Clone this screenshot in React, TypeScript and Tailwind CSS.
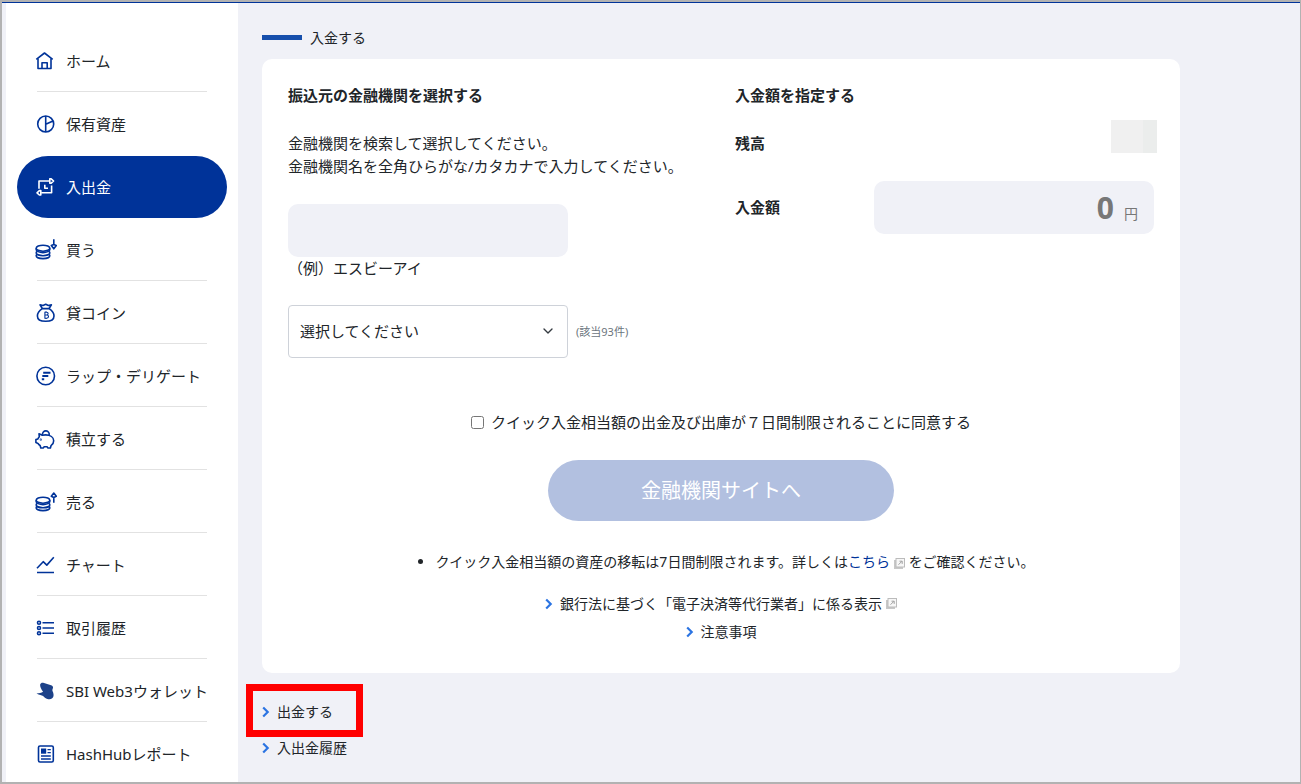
import type { ReactNode } from "react";
import { ChevronDown } from "lucide-react";

const COIN_STACK = (
  <>
    <ellipse cx="8" cy="9.2" rx="6.8" ry="3" />
    <path d="M1.2 9.200v1.200c0 1.700 3 3.200 6.800 3.200s6.800-1.500 6.800-3.200V9.200" />
    <path d="M2 12.400c-.5.500-.8 1-.8 1.500 0 1.500 3 2.800 6.800 2.800s6.800-1.300 6.800-2.800c0-.5-.3-1-.8-1.500" />
    <path d="M2 15.300c-.5.500-.8.900-.8 1.400 0 1.600 3 2.900 6.800 2.900s6.800-1.300 6.800-2.900c0-.5-.3-.9-.8-1.400" />
  </>
);

type NavItem = { label: string; icon: ReactNode; active?: boolean; noLine?: boolean };

const navItems: NavItem[] = [
  {
    label: "ホーム",
    icon: (
      <>
        <path d="M1.3 9.3 9.5 3l8.200 6.300" />
        <path d="M3 8.500v10h13v-10" />
        <path d="M7 18.500v-5.800h5.200v5.800" />
      </>
    ),
  },
  {
    label: "保有資産",
    noLine: true,
    icon: (
      <>
        <circle cx="10.700" cy="11" r="8" />
        <path d="M10.700 3v16M10.700 11.300l7.300-3.400" />
      </>
    ),
  },
  {
    label: "入出金",
    active: true,
    icon: (
      <>
        <path d="M4 12.700V5h10.500M16.600 9.500v7.300H6.200" />
        <path d="M14.800 2.800h1.400L18.600 5l-2.400 2.200h-1.400zM5.800 14.600H4.400L2 16.800 4.400 19h1.400z" />
        <path d="M9.800 8.800v3.400h3.200" />
      </>
    ),
  },
  {
    label: "買う",
    icon: (
      <>
        {COIN_STACK}
        <path d="M18.800.3V6M16.300 6.600l2.500-1.100 2.500 1.100-2.500 3.200z" />
      </>
    ),
  },
  {
    label: "貸コイン",
    icon: (
      <>
        <path d="M7.300 6.600c-3 2-4.900 4.700-4.900 7.300 0 3.200 2.600 5.400 8.300 5.400s8.300-2.200 8.300-5.400c0-2.600-1.900-5.300-4.900-7.300z" />
        <path d="m7.300 6.500-2.300-3.600 3 .6 2.700-1.200 2.700 1.200 3-.6-2.300 3.600" />
        <path
          strokeWidth="1.100"
          d="M9.400 10.200h2.200c2 0 2 2.800 0 2.800H9.800h2c2.300 0 2.300 3.200 0 3.200H9.400M9.900 10.200v6M11 9.300v.9M11 16.200v.9"
        />
      </>
    ),
  },
  {
    label: "ラップ・デリゲート",
    icon: (
      <>
        <circle cx="10.700" cy="11" r="8.800" />
        <path strokeWidth="2" d="M8.200 7.700h7.300M7.300 11h6M6.800 14.300h2.400" />
      </>
    ),
  },
  {
    label: "積立する",
    icon: (
      <>
        <path d="M4.300 8.800 4 5.700l3.300 1.600c1-.3 2-.4 3.200-.4 4.800 0 8.200 2.400 8.200 5.900 0 2-1 3.700-2.700 4.900l-.6 2.300h-2.600l-.6-1.200H9l-.6 1.200H5.800l-.7-2.500c-.9-.5-1.600-1.200-2.100-2.100L.9 14.600v-3l2-.7c.3-.8.8-1.500 1.400-2.100z" />
        <path d="M7.500 6.900a3.400 3.400 0 1 1 6.600.4" />
        <circle cx="5.800" cy="11.700" r=".3" />
      </>
    ),
  },
  {
    label: "売る",
    icon: (
      <>
        {COIN_STACK}
        <path d="M18.800 11.700V6M16.300 5.300l2.500-3.200 2.500 3.200-2.500 1.100z" />
      </>
    ),
  },
  {
    label: "チャート",
    icon: <path d="m2 14.200 6.200-6.500 3.600 3.400 7-7.800M2 18.500h17" />,
  },
  {
    label: "取引履歴",
    icon: (
      <>
        <circle cx="4" cy="5.700" r="1.500" />
        <circle cx="4" cy="11" r="1.500" />
        <circle cx="4" cy="16.300" r="1.500" />
        <path d="M7.500 5.700H19M7.500 11H19M7.500 16.300H19" />
      </>
    ),
  },
  {
    label: "SBI Web3ウォレット",
    icon: (
      <path
        fill="#1d4289"
        stroke="none"
        d="M5.200 4.300c.6-1.500 2-1.900 3.800-1.300l7.100 2.200c1.600.5 2.300 1.600 1.800 3-.4 1.200-.8 2-.2 3.200.8 1.800 1.200 3.700.6 5.400-.7 1.800-2.600 2.900-5 2.400-2.300-.5-4-1.600-5.200-3.200-1.600-.2-3.600-1.100-6.600-2.400 2.500-.3 4.900-.7 6.600-1.800-1.300-1.700-3.400-4.900-2.900-7.500z"
      />
    ),
  },
  {
    label: "HashHubレポート",
    icon: (
      <>
        <rect x="3.500" y="3" width="14.800" height="16" rx="1.500" />
        <rect x="6" y="5.500" width="5.200" height="5.200" fill="currentColor" stroke="none" />
        <path strokeWidth="1.300" d="M12.500 6.600h3.300M12.500 9.700h3.300M6 13h9.800M6 16h9.800" />
      </>
    ),
  },
];

function SideNav() {
  return (
    <nav className="ml-1 w-58 shrink-0 bg-white px-[11px] pt-[27px]">
      <ul className="flex flex-col gap-px">
        {navItems.map((item) => (
          <li
            key={item.label}
            className={item.active ? "rounded-full bg-[#003399] px-5 text-white" : "px-5 text-[#212529]"}
          >
            <a
              href="#"
              className={`flex h-[62px] items-center gap-[9px] border-b pt-px whitespace-nowrap ${
                item.active || item.noLine ? "border-transparent" : "border-[#e2e2e2]"
              }`}
            >
              <svg
                viewBox="0 0 22 22"
                className={`-ml-0.5 size-[22px] shrink-0 ${item.active ? "text-white" : "text-[#003399]"}`}
                fill="none"
                stroke="currentColor"
                strokeWidth="1.600"
                strokeLinejoin="round"
                aria-hidden="true"
              >
                {item.icon}
              </svg>
              {item.label}
            </a>
          </li>
        ))}
      </ul>
    </nav>
  );
}

function ExternalIcon() {
  return (
    <svg viewBox="0 0 11 11" className="ml-1 inline-block size-[11px]" fill="none" aria-hidden="true">
      <path d="M1 2v8h8" stroke="#c8c8c8" strokeWidth="2" />
      <rect x="2" y=".5" width="8.500" height="8.500" fill="#f7f7f7" stroke="#bbb" />
      <path d="M4.500 6.700l3.300-3.300M5.500 3.200h2.700v2.700" stroke="#a0a0a0" />
    </svg>
  );
}

function ArrowLink({ label, external }: { label: string; external?: boolean }) {
  return (
    <a href="#" className="inline-flex items-center text-sm leading-[21px]">
      <svg viewBox="0 0 8 12" className="mr-[7px] h-3 w-2" fill="none" aria-hidden="true">
        <path d="m1.200 1.500 4.500 4.500-4.500 4.500" stroke="#2b74e2" strokeWidth="2.200" />
      </svg>
      {label}
      {external && <ExternalIcon />}
    </a>
  );
}

function DepositCard() {
  return (
    <section className="rounded-[10px] bg-white px-[26px] pt-[25px] pb-[31px]">
      <div className="grid grid-cols-2 gap-7">
        <div>
          <h2 className="font-bold">振込元の金融機関を選択する</h2>
          <label htmlFor="bank-name" className="mt-[25px] block whitespace-nowrap">
            金融機関を検索して選択してください。
            <br />
            金融機関名を全角ひらがな/カタカナで入力してください。
          </label>
          <input
            id="bank-name"
            type="text"
            className="mt-[26px] block h-[53px] w-70 rounded-[10px] bg-[#f0f1f7] px-3 outline-none"
          />
          <p>（例）エスビーアイ</p>
          <div className="mt-[25px] flex items-center gap-2">
            <div className="relative w-70">
              <select
                aria-label="金融機関"
                className="block h-[53px] w-full appearance-none rounded-sm border border-[#ced2d9] bg-white pl-[11px]"
              >
                <option>選択してください</option>
              </select>
              <ChevronDown className="pointer-events-none absolute top-[18px] right-3 size-4 text-[#343a40]" />
            </div>
            <span className="text-[11px] text-[#6c757d]">(該当93件)</span>
          </div>
        </div>

        <div>
          <h2 className="font-bold">入金額を指定する</h2>
          <div className="mt-[13px] flex items-start justify-between">
            <span className="pt-3 font-bold">残高</span>
            <span className="-mr-[3px] flex h-[33px]">
              <span className="w-8 bg-[#f0f0f0]" />
              <span className="w-3.5 bg-[#ebedec]" />
            </span>
          </div>
          <div className="mt-[26px] flex items-center justify-between">
            <label htmlFor="amount" className="font-bold">
              入金額
            </label>
            <div className="flex h-[53px] w-70 items-baseline rounded-[10px] bg-[#f0f1f7] pr-4 text-[#777]">
              <input
                id="amount"
                type="text"
                inputMode="numeric"
                defaultValue="0"
                className="h-[53px] w-full min-w-0 bg-transparent pr-2.5 text-right text-[30px] font-bold outline-none"
              />
              <span className="text-sm">円</span>
            </div>
          </div>
        </div>
      </div>

      <div className="mt-[53px] flex flex-col items-center">
        <label className="flex items-center gap-[7px]">
          <input type="checkbox" className="size-[13px]" />
          クイック入金相当額の出金及び出庫が７日間制限されることに同意する
        </label>
        <button type="button" className="mt-[26px] h-[61px] w-[346px] rounded-full bg-[#b2c0e0] text-xl text-white">
          金融機関サイトへ
        </button>
        <ul className="mt-[30px] list-disc pl-7 text-sm leading-[21px]">
          <li>
            クイック入金相当額の資産の移転は7日間制限されます。詳しくは
            <a href="#" className="text-[#003399]">
              こちら
              <ExternalIcon />
            </a>{" "}
            をご確認ください。
          </li>
        </ul>
        <div className="mt-[21px] flex flex-col items-center gap-[7px]">
          <ArrowLink label="銀行法に基づく「電子決済等代行業者」に係る表示" external />
          <ArrowLink label="注意事項" />
        </div>
      </div>
    </section>
  );
}

export default function App() {
  return (
    <div className="h-screen overflow-hidden border-2 border-r border-[#b2b2b2] bg-[#f0f1f7] font-['Noto_Sans','Noto_Sans_CJK_JP',sans-serif] text-[15px] leading-[23px] text-[#212529]">
      <div className="flex min-h-full border-t border-[#003399]">
        <SideNav />
        <main className="min-w-0 flex-1 px-6 pt-6">
          <div className="max-w-[918px]">
            <h1 className="mb-[11px] flex items-center gap-2 text-sm leading-[21px]">
              <span className="h-[5px] w-10 bg-[#164fac]" />
              入金する
            </h1>
            <DepositCard />
            <div className="mt-7 flex flex-col items-start gap-[15px]">
              <div className="relative flex">
                <ArrowLink label="出金する" />
                {/* highlight frame */}
                <span className="pointer-events-none absolute -top-[17px] -right-[30px] -bottom-[15px] -left-[16px] border-7 border-[#ff0000]" />
              </div>
              <ArrowLink label="入出金履歴" />
            </div>
          </div>
        </main>
      </div>
    </div>
  );
}
